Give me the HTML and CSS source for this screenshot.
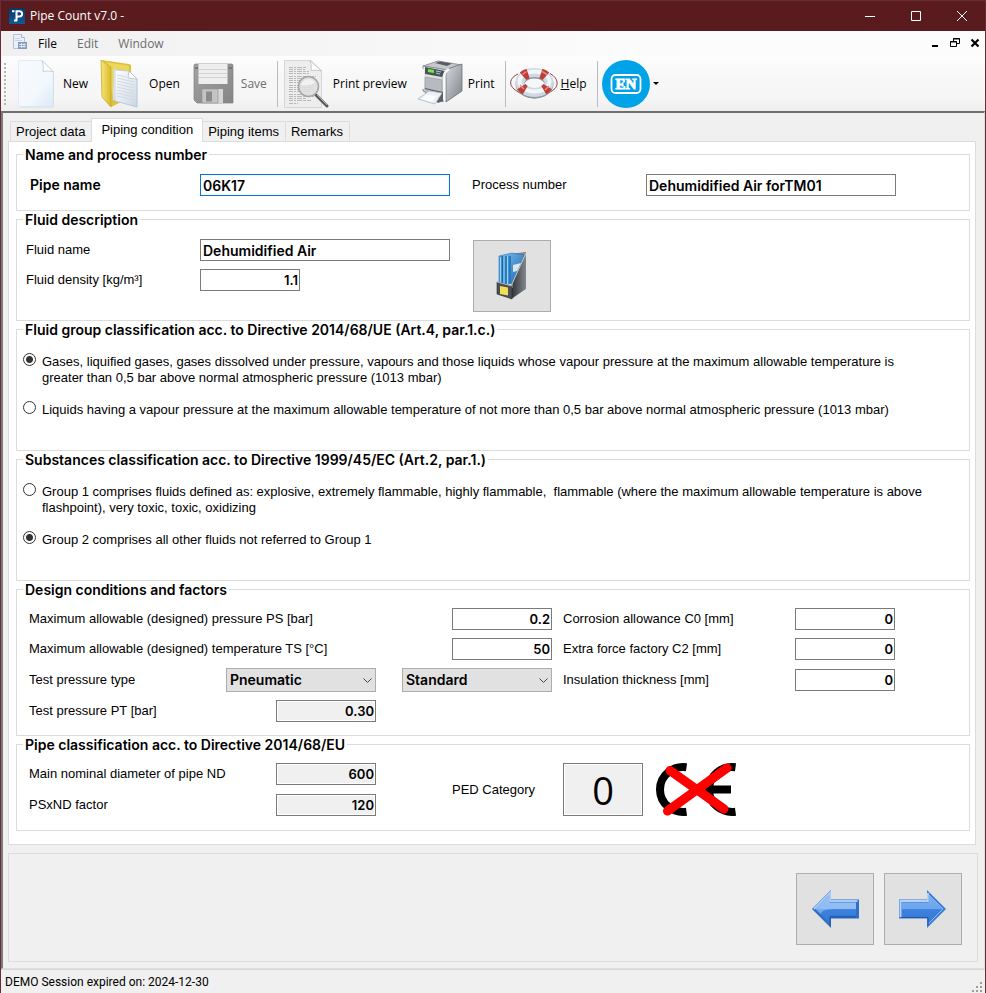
FILE: index.html
```html
<!DOCTYPE html>
<html lang="en">
<head>
<meta charset="utf-8">
<title>Pipe Count v7.0</title>
<link rel="stylesheet" href="styles.css">
</head>
<body>
<div class="window">
  <header class="titlebar">
    <svg class="app-icon" viewBox="0 0 16 16" aria-hidden="true">
      <defs><linearGradient id="appg" x1="0" y1="0" x2="0" y2="1"><stop offset="0" stop-color="#0a3765"/><stop offset="1" stop-color="#0d5a97"/></linearGradient></defs>
      <rect width="16" height="16" fill="url(#appg)"/>
      <path d="M3 3.200h2.500M7.500 2.300v11M7 3.200h3.500a2.600 2.600 0 0 1 0 5.200H8M5 12.500h3" fill="none" stroke="#fff" stroke-width="2"/>
    </svg>
    <h1 class="title">Pipe Count v7.0 -</h1>
    <div class="window-buttons">
      <button type="button" aria-label="Minimize"><svg viewBox="0 0 10 10"><path d="M0 5.500h10"/></svg></button>
      <button type="button" aria-label="Maximize"><svg viewBox="0 0 10 10"><path d="M.5.500h9v9h-9z"/></svg></button>
      <button type="button" aria-label="Close"><svg viewBox="0 0 10 10"><path d="M0 0l10 10M10 0L0 10"/></svg></button>
    </div>
  </header>

  <nav class="menubar">
    <svg class="doc-icon" viewBox="0 0 14 16" aria-hidden="true">
      <path d="M.5.500h8l3 3v11H.5z" fill="#eaf0f9" stroke="#b4c2d8"/>
      <path d="M8.500.500v3h3" fill="#fff" stroke="#9fb2cf"/>
      <path d="M2 4.500h5M2 6.500h7" stroke="#c6d3e6"/>
      <path d="M5 8h9v7H5z" fill="#8299c0"/>
      <path d="M6 10.500h7M6 12.500h7M8.500 9v5M11 9v5" stroke="#e8f0fb" stroke-width=".8"/>
    </svg>
    <button type="button" class="menu">File</button>
    <button type="button" class="menu" disabled>Edit</button>
    <button type="button" class="menu" disabled>Window</button>
    <div class="child-buttons">
      <button type="button" aria-label="Minimize document"><svg viewBox="0 0 10 10"><path d="M2 8h6" stroke-width="2"/></svg></button>
      <button type="button" aria-label="Restore document"><svg viewBox="0 0 10 10"><path d="M3.500 3V.500h6v5H7M3 1h7M.5 3.500h6v5h-6zM0 4h7"/></svg></button>
      <button type="button" aria-label="Close document"><svg viewBox="0 0 10 10"><path d="M1.500 1.500l7 7M8.500 1.500l-7 7" stroke-width="2.200"/></svg></button>
    </div>
  </nav>

  <div class="toolbar" role="toolbar" aria-label="Main">
    <span class="grip"></span>
    <button type="button" class="tool">
      <svg viewBox="0 0 48 48" aria-hidden="true">
        <defs><linearGradient id="pg" x1="0" y1="0" x2="1" y2="1"><stop offset="0" stop-color="#f8fafe"/><stop offset=".6" stop-color="#f3f8fd"/><stop offset="1" stop-color="#dbe8f6"/></linearGradient></defs>
        <path d="M6.500.500H30L41.500 12v35h-35z" fill="url(#pg)" stroke="#e6ebf2"/>
        <path d="M30 .5c1.500 4 1.500 7 1 11 4-.8 7-.6 10.500.500z" fill="#fff" stroke="#b9c6d6" stroke-width=".8"/>
        <path d="M41.500 12v35H8" fill="none" stroke="#d2deeb"/>
      </svg>New</button>
    <button type="button" class="tool">
      <svg viewBox="0 0 48 48" aria-hidden="true">
        <defs>
          <linearGradient id="fg" x1="0" y1="0" x2="1" y2="0"><stop offset="0" stop-color="#f7e67a"/><stop offset="1" stop-color="#d8b92a"/></linearGradient>
          <linearGradient id="sg" x1="0" y1="0" x2="1" y2="1"><stop offset="0" stop-color="#fff"/><stop offset="1" stop-color="#c9d6e5"/></linearGradient>
        </defs>
        <path d="M3 0l28 4 2 1v14l-4 20-16 8-9-10z" fill="#dcc23c"/>
        <path d="M6 2l21 3 4 1v12l-15 22z" fill="#ecd75a"/>
        <path d="M16 9l15 3 8 7v28l-24-7z" fill="url(#sg)" stroke="#c2ccd8" stroke-width=".6"/>
        <path d="M31 11l8 8v28l-22-6V10z" fill="url(#sg)" stroke="#b6c2d0" stroke-width=".7"/>
        <path d="M31 11l-1 7 9 1z" fill="#fff" stroke="#aab6c4" stroke-width=".7"/>
        <path d="M19 15l9 2M19 18l17 4M19 21l17 4M19 24l17 4M19 27l17 4M19 30l17 4M19 33l17 4M19 36l17 4" stroke="#d2d9e2"/>
        <path d="M3 0l10 7v40L4 37z" fill="url(#fg)" stroke="#c6a925" stroke-width=".7"/>
      </svg>Open</button>
    <button type="button" class="tool" disabled>
      <svg viewBox="0 0 48 48" aria-hidden="true">
        <defs><linearGradient id="dg" x1="0" y1="0" x2="1" y2="1"><stop offset="0" stop-color="#a2a2a2"/><stop offset="1" stop-color="#858585"/></linearGradient></defs>
        <path d="M4 5l1-1h37l1 1v38H7l-3-3z" fill="url(#dg)" stroke="#818181" stroke-width=".7"/>
        <path d="M8.500 4h29v20h-29z" fill="#eee"/>
        <path d="M9 9.500h28M9 13.500h28M9 17.500h28" stroke="#d2d2d2"/>
        <path d="M12 29h21v14H12z" fill="#d5d5d5"/>
        <path d="M12 29h16v14H12z" fill="#c4c4c4" stroke="#999" stroke-width=".7"/>
        <path d="M16 31.500h6v10h-6z" fill="#8b8b8b"/>
        <path d="M5 7h3v2H5zM38.500 7H42v2h-3.500z" fill="#777"/>
      </svg>Save</button>
    <span class="separator"></span>
    <button type="button" class="tool">
      <svg viewBox="0 0 48 48" aria-hidden="true">
        <path d="M2.500.500H29L39.500 11v36.500h-37z" fill="#ededed" stroke="#d6d6d6"/>
        <path d="M28 .5c1.500 4 1.500 7 1 10 4-.6 7-.4 10.500.500z" fill="#fff" stroke="#bdbdbd" stroke-width=".8"/>
        <path d="M7 7.500h18M7 9.500h16M7 11.500h20M7 13.500h20M7 16.500h27M7 18.500h26M7 20.500h27M7 22.500h26M7 25.500h27M7 27.500h24M7 29.500h27M7 31.500h25M7 34.500h27M7 36.500h25M7 38.500h18M7 40.500h22M7 43.500h9" stroke="#b9b9b9" stroke-dasharray="4 1 2 1 5 1 3 1"/>
        <path d="M34 35l11 11" stroke="#555" stroke-width="3" stroke-linecap="round"/>
        <path d="M35 35l10 10" stroke="#a9a9a9" stroke-width="1"/>
        <circle cx="26.500" cy="26.500" r="10" fill="#dedede" fill-opacity=".85" stroke="#a5a5a5" stroke-width="1.500"/>
        <path d="M19 25a8 8 0 0 1 14-3c-4 4-9 4-14 3z" fill="#f6f6f6" opacity=".8"/>
      </svg>Print preview</button>
    <button type="button" class="tool">
      <svg viewBox="0 0 48 48" aria-hidden="true">
        <defs>
          <linearGradient id="pr1" x1="0" y1="0" x2="1" y2="1"><stop offset="0" stop-color="#d7d9dc"/><stop offset="1" stop-color="#7d8288"/></linearGradient>
          <linearGradient id="pr2" x1="0" y1="0" x2="0" y2="1"><stop offset="0" stop-color="#f4f5f7"/><stop offset="1" stop-color="#a6abb1"/></linearGradient>
        </defs>
        <path d="M6 6L21 1l24 4-15 5z" fill="#c5c9ce" stroke="#84888e" stroke-width=".8"/>
        <path d="M18 3l5-1.500 12 2L30 6z" fill="#595d62"/>
        <path d="M29 15Q29 9 33 8l12-4v27L29 42z" fill="url(#pr1)" stroke="#6f747a" stroke-width=".8"/>
        <path d="M6 6l24 4-4 6v26L6 31z" fill="url(#pr2)" stroke="#7e8389" stroke-width=".8"/>
        <path d="M8 7l20 4-3 6L8 14z" fill="#46565c"/>
        <path d="M11 9l6 1v3l-6-1z" fill="#74ec38"/>
        <path d="M19 11l5 1M19 13l4 1" stroke="#b8c2c8"/>
        <path d="M8 17l17 3v12L8 29z" fill="#b7bbc0" stroke="#999ea4" stroke-width=".7"/>
        <path d="M6 9v20M27 40V17q0-5 5-8" fill="none" stroke="#f6f7f8" stroke-width="2.500"/>
        <path d="M8 28l18 4v9l-5 2-3-3 2-8L8 29z" fill="#5c6168"/>
        <path d="M12 31l13 2-7 11L1 39z" fill="#edf2f9" stroke="#aab4c2" stroke-width=".8"/>
        <path d="M9 35l10 1-4 6-10-3z" fill="#fff"/>
      </svg>Print</button>
    <span class="separator"></span>
    <button type="button" class="tool">
      <svg viewBox="0 0 48 48" aria-hidden="true">
        <g fill="none">
          <path d="M8 14C-1 18-1 25 4 29s6 4 10 6q10 6 21-.5c4-2 7-3 10-6s4-10-5-15" stroke="#8d4347" stroke-width="1"/>
          <ellipse cx="24.500" cy="24" rx="14.500" ry="10" stroke="#8b98a4" stroke-width="9"/>
          <ellipse cx="24.500" cy="22.500" rx="14.500" ry="10" stroke="#cfd9e1" stroke-width="9"/>
          <ellipse cx="24.500" cy="21.500" rx="15" ry="10" stroke="#f3f6f9" stroke-width="4"/>
          <g stroke="#bd4038" stroke-width="10">
            <path d="M37.700 26.600A14.500 10 0 0 1 33.800 30.200M15.200 30.200A14.500 10 0 0 1 11.300 26.600M13.100 16.300A14.500 10 0 0 1 18.100 13.500M30.900 13.500A14.500 10 0 0 1 35.900 16.300"/>
          </g>
          <path d="M39 26l-4 4M14 29l-4-4M12.500 14.500l4-3M32 11.500l5 3" stroke="#e88b82" stroke-width="1.500"/>
        </g>
      </svg><span><u>H</u>elp</span></button>
    <span class="separator"></span>
    <button type="button" class="tool language" aria-label="Language: EN">
      <svg viewBox="0 0 48 48" aria-hidden="true">
        <circle cx="24" cy="24" r="24" fill="#00a2e8"/>
        <rect x="9.500" y="15" width="29" height="18" rx="4" fill="none" stroke="#fff" stroke-width="1.800"/>
        <text x="24" y="29" text-anchor="middle" class="lang-text">EN</text>
      </svg><i class="drop"></i></button>
  </div>

  <main class="client">
    <div class="tabs" role="tablist">
      <button type="button" role="tab" class="tab">Project data</button>
      <button type="button" role="tab" class="tab active" aria-selected="true">Piping condition</button>
      <button type="button" role="tab" class="tab">Piping items</button>
      <button type="button" role="tab" class="tab">Remarks</button>
    </div>

    <form class="page">
      <fieldset class="short">
        <legend>Name and process number</legend>
        <div class="pairs">
          <label for="pipe" class="strong">Pipe name</label>
          <input id="pipe" class="focused" value="06K17">
          <label for="process" class="second">Process number</label>
          <input id="process" value="Dehumidified Air forTM01">
        </div>
      </fieldset>

      <fieldset class="fluid">
        <legend>Fluid description</legend>
        <div class="pairs">
          <label for="fluid">Fluid name</label>
          <input id="fluid" value="Dehumidified Air">
          <button type="button" class="big-button library" aria-label="Fluid library">
            <svg viewBox="0 0 48 48" aria-hidden="true">
              <defs>
                <linearGradient id="bl" x1="0" y1="0" x2="1" y2="1"><stop offset="0" stop-color="#79bdf0"/><stop offset="1" stop-color="#1b68ae"/></linearGradient>
                <linearGradient id="bx" x1="0" y1="0" x2="1" y2="0"><stop offset="0" stop-color="#33363a"/><stop offset="1" stop-color="#84888d"/></linearGradient>
              </defs>
              <path d="M22 2l16-2v36L24 47z" fill="#7b8287"/>
              <path d="M11 4L24 1l12 2-10 28-15 1z" fill="url(#bl)" stroke="#2c76b8" stroke-width=".6"/>
              <path d="M11 4h12v28H11z" fill="#3c91d4"/>
              <path d="M12.500 5v26M16 4v28M19.500 4v28" stroke="#9ed2f7"/>
              <path d="M14.500 4v28M18 4v28M22 4v28" stroke="#1b64a6"/>
              <path d="M25 13l8-2-4 8-4 1z" fill="#dce6ee"/>
              <path d="M38 1v36L24 46V32z" fill="url(#bx)"/>
              <path d="M38 1L24 32v4" fill="none" stroke="#c8cccf"/>
              <path d="M9 30l15 4v13L9 42z" fill="#4b4e52" stroke="#25282b" stroke-width=".6"/>
              <path d="M9 30l15 4" stroke="#b6babd"/>
              <path d="M12 34l8 1.500v8L12 42z" fill="#f2df58"/>
            </svg></button>
          <label for="density" class="first">Fluid density [kg/m³]</label>
          <input id="density" class="number" value="1.1">
        </div>
      </fieldset>

      <fieldset class="choices">
        <legend>Fluid group classification acc. to Directive 2014/68/UE (Art.4, par.1.c.)</legend>
        <label class="choice"><input type="radio" name="group" checked><span>Gases, liquified gases, gases dissolved under pressure, vapours and those liquids whose vapour pressure at the maximum allowable temperature is greater than 0,5 bar above normal atmospheric pressure (1013 mbar)</span></label>
        <label class="choice"><input type="radio" name="group"><span>Liquids having a vapour pressure at the maximum allowable temperature of not more than 0,5 bar above normal atmospheric pressure (1013 mbar)</span></label>
      </fieldset>

      <fieldset class="choices">
        <legend>Substances classification acc. to Directive 1999/45/EC (Art.2, par.1.)</legend>
        <label class="choice"><input type="radio" name="substance"><span>Group 1 comprises fluids defined as: explosive, extremely flammable, highly flammable,&nbsp; flammable (where the maximum allowable temperature is above flashpoint), very toxic, toxic, oxidizing</span></label>
        <label class="choice"><input type="radio" name="substance" checked><span>Group 2 comprises all other fluids not referred to Group 1</span></label>
      </fieldset>

      <fieldset class="design">
        <legend>Design conditions and factors</legend>
        <div class="factors">
          <label for="ps" class="wide">Maximum allowable (designed) pressure PS [bar]</label>
          <input id="ps" class="number" value="0.2">
          <label for="c0" class="third">Corrosion allowance C0 [mm]</label>
          <input id="c0" class="number" value="0">

          <label for="ts" class="wide">Maximum allowable (designed) temperature TS [°C]</label>
          <input id="ts" class="number" value="50">
          <label for="c2" class="third">Extra force factory C2 [mm]</label>
          <input id="c2" class="number" value="0">

          <label for="testtype">Test pressure type</label>
          <span class="combo"><select id="testtype"><option>Pneumatic</option></select><svg viewBox="0 0 9 5"><path d="M.5.500l4 4 4-4"/></svg></span>
          <span class="combo"><select aria-label="Test standard"><option>Standard</option></select><svg viewBox="0 0 9 5"><path d="M.5.500l4 4 4-4"/></svg></span>
          <label for="ins" class="third">Insulation thickness [mm]</label>
          <input id="ins" class="number" value="0">

          <label for="pt" class="first">Test pressure PT [bar]</label>
          <input id="pt" class="number" value="0.30" readonly>
        </div>
      </fieldset>

      <fieldset class="pipe-class">
        <legend>Pipe classification acc. to Directive 2014/68/EU</legend>
        <div class="factors">
          <label for="nd">Main nominal diameter of pipe ND</label>
          <input id="nd" class="number" value="600" readonly>
          <label for="psnd" class="first">PSxND factor</label>
          <input id="psnd" class="number" value="120" readonly>
          <label for="ped" class="ped-label">PED Category</label>
          <div class="ped">
            <input id="ped" class="category" value="0" readonly>
            <svg class="ce" viewBox="0 0 81 53" role="img" aria-label="CE mark not applicable">
              <g fill="none" stroke="#000" stroke-width="8">
                <path d="M30.500 4.300C17 2.500 4 12 4 26.500S17 50.500 30.500 48.700"/>
                <path d="M79.500 4.300C66 2.500 53 12 53 26.500s13 24 26.500 22.200M53 26.500h22"/>
              </g>
              <path d="M14 7.500L68 46M71 5L11.500 48" stroke="#f00" stroke-width="9" stroke-linecap="round"/>
            </svg>
          </div>
        </div>
      </fieldset>
    </form>

    <div class="pager">
      <button type="button" class="big-button" aria-label="Previous">
        <svg viewBox="0 0 48 48" aria-hidden="true">
          <defs><linearGradient id="ar" x1="0" y1="0" x2="0" y2="1"><stop offset="0" stop-color="#7cb0f3"/><stop offset=".5" stop-color="#6ea4ec"/><stop offset=".52" stop-color="#3b82e0"/><stop offset="1" stop-color="#3a78d2"/></linearGradient></defs>
          <path d="M1 24L20 5v9.500h28v19H20V43z" fill="#2f6fc6"/>
          <path d="M3 24L19 8v8h27.500" fill="none" stroke="#a9cbf8" stroke-width="2"/>
          <path d="M4.500 24L18.500 10v7.500H45v13H18.500V38z" fill="url(#ar)"/>
          <path d="M4.500 24l5 5c2-4 6-4.500 13-5H45v-6.500H18.500V10z" fill="#b9d6fb" opacity=".45"/>
          <path d="M19 41v-9h26" fill="none" stroke="#1d58ac" stroke-width="1"/>
        </svg></button>
      <button type="button" class="big-button" aria-label="Next">
        <svg viewBox="0 0 48 48" aria-hidden="true">
          <path d="M47 24L28 5v9.500H0v19h28V43z" fill="#3a7cd6"/>
          <path d="M1.500 32V16H29V8" fill="none" stroke="#b5d3fa" stroke-width="2"/>
          <path d="M43.500 24L29.500 10v7.500H3v13h26.500V38z" fill="url(#ar)"/>
          <path d="M29.500 9.500L44 24 29.500 38.500" fill="none" stroke="#8ebaf5" stroke-width="1"/>
          <path d="M2 32.500h27v8" fill="none" stroke="#1d58ac" stroke-width="1"/>
        </svg></button>
    </div>
  </main>

  <footer class="statusbar">
    <span>DEMO Session expired on: 2024-12-30</span>
    <svg class="sizer" viewBox="0 0 12 12" aria-hidden="true"><path d="M9 1h2v2H9zM5 5h2v2H5zM9 5h2v2H9zM1 9h2v2H1zM5 9h2v2H5zM9 9h2v2H9z" fill="#9d9d9d"/></svg>
  </footer>
</div>
</body>
</html>
```
FILE: styles.css
```css
* { box-sizing: border-box; }

:root {
  --ui: "Open Sans", "Noto Sans", sans-serif;
  --form: "Liberation Sans", Arial, sans-serif;
  --bold: Inter, "Liberation Sans", sans-serif;
}

body {
  margin: 0;
  font: 12px/16px var(--ui);
  color: #000;
  background: #f0f0f0;
}

button, input, select { font: inherit; color: inherit; margin: 0; padding: 0; }
button { background: none; border: 0; }
svg { display: block; }

.window {
  min-height: 100vh;
  display: flex;
  flex-direction: column;
  border: 1px solid #672c35;
}

/* Title bar */
.titlebar {
  display: flex;
  align-items: center;
  height: 30px;
  padding-left: 8px;
  background: #5a1b1f;
  color: #fff;
}
.app-icon { width: 16px; height: 16px; }
.title { flex: 1; margin: 0 0 0 5px; font-size: 12px; font-weight: 400; }
.window-buttons { display: flex; height: 100%; }
.window-buttons button { width: 46px; display: grid; place-items: center; }
.window-buttons svg { width: 10px; height: 10px; fill: none; stroke: #fff; overflow: visible; }

/* Menu bar */
.menubar {
  display: flex;
  align-items: center;
  height: 25px;
  padding: 1px 5px 0 12px;
  background: linear-gradient(90deg, #f0f0f0, #fcfcfc 70%);
}
.doc-icon { width: 14px; height: 16px; margin: 0 4px 4px 0; }
.menu { padding: 0 7px; margin-right: 6px; }
.menu:disabled { color: #6d6d6d; }
.child-buttons { display: flex; gap: 10px; margin-left: auto; padding-bottom: 2px; }
.child-buttons svg { width: 10px; height: 10px; fill: none; stroke: #000; }

/* Toolbar */
.toolbar {
  display: flex;
  align-items: center;
  height: 55px;
  padding-left: 3px;
  background: linear-gradient(#fdfdfd, #f7f7f7 40%, #f6f6f6 75%, #eee);
}
.grip { width: 2px; height: 42px; margin-right: 6px; background: repeating-linear-gradient(#b5b5b5 0 2px, transparent 2px 4px); }
.tool { display: flex; align-items: center; gap: 3px; margin-right: 10px; }
.tool:disabled { color: #6d6d6d; }
.tool svg { width: 48px; height: 48px; flex: none; }
.separator { width: 1px; height: 46px; margin-right: 4px; background: #b9bcbf; }
.lang-text { font: 700 15px "Liberation Serif", serif; fill: #fff; stroke: #fff; }
.drop { border: 3px solid transparent; border-top-color: #000; border-bottom: 0; }

/* Document area */
.client {
  flex: 1;
  padding: 5px 6px 6px 5px;
  border: solid;
  border-width: 2px 1px 1px 2px;
  border-color: #6f6f6f #dfdfdf #dfdfdf #7c7c7c;
  background: #f0f0f0;
  font-family: var(--form);
  font-size: 13px;
}
.tabs { display: flex; align-items: flex-end; padding-left: 2px; }
.tab {
  height: 20px;
  padding: 0 6px 0 5px;
  border: 1px solid #dcdcdc;
  border-bottom: 0;
  margin-left: -1px;
}
.tab.active {
  z-index: 1;
  height: 24px;
  padding: 0 9px 2px;
  margin-bottom: -1px;
  background: #fff;
}
.tab:first-child { margin-left: 0; }

.page {
  margin-right: 2px;
  padding: 4px 5px 13px 7px;
  border: 1px solid #dcdcdc;
  background: #fff;
}

fieldset {
  min-width: 0;
  margin: 0;
  padding: 0 8px 0 6px;
  border: 1px solid #dcdcdc;
}
legend {
  height: 17px;
  padding: 0 2px;
  font: 600 14px/18px var(--bold);
}
.short { height: 65px; }
.fluid { height: 110px; }
.choices { height: 130px; }
.design { height: 155px; }
.pipe-class { height: 95px; }

input, select {
  height: 22px;
  width: 100%;
  border: 1px solid #7a7a7a;
  border-radius: 0;
  padding: 0 2px;
  background: #fff;
  font: 600 14px/20px var(--bold);
}
.number { width: 100px; text-align: right; justify-self: end; padding: 0 1px; font-size: 13px; }
input[readonly] { background: #f0f0f0; box-shadow: inset 0 0 0 1px #fff; }
.focused { border-color: #0078d7; outline: none; }
.strong { padding-left: 4px; font: 600 14px/16px var(--bold); }
.first { grid-column: 1; }

.pairs {
  display: grid;
  grid-template-columns: 174px 250px 196px 250px;
  row-gap: 8px;
  align-items: center;
  padding: 11px 0 0 3px;
}
.second { padding-left: 22px; }
.pairs .number { justify-self: start; }

.big-button {
  display: grid;
  place-items: center;
  width: 78px;
  height: 72px;
  border: 1px solid #adadad;
  background: #e1e1e1;
}
.big-button svg { width: 48px; height: 48px; }
.library { grid-area: 1 / 3 / 4 / 4; align-self: start; margin: 1px 0 0 23px; }

.choices { padding: 15px 40px 0 6px; }
.choice { display: grid; grid-template-columns: 19px 1fr; margin-bottom: 15px; line-height: 16px; }
.choice span { padding-top: 1px; }
.choice input {
  appearance: none;
  width: 13px;
  height: 13px;
  padding: 0;
  border: 1px solid #333;
  border-radius: 50%;
}
.choice input:checked { background: radial-gradient(circle, #333 0 3px, #fff 4px); }

.factors {
  display: grid;
  grid-template-columns: 197px 150px 26px 150px 11px 232px 100px;
  row-gap: 8px;
  align-items: center;
  padding: 10px 0 0 6px;
}
.factors .wide { grid-column: 1 / 4; }
.factors .third { grid-column: 6; }
.factors .combo:nth-of-type(2) { grid-column: 4; }

.combo { display: grid; align-items: center; }
.combo > * { grid-area: 1 / 1; }
.combo select { appearance: none; height: 24px; padding: 0 3px; border-color: #adadad; background: #e1e1e1; }
.combo svg { width: 9px; height: 5px; margin-right: 4px; justify-self: end; fill: none; stroke: #444; pointer-events: none; overflow: visible; }

.pipe-class .factors { row-gap: 9px; }
.pipe-class .number { grid-column: 2; }
.ped-label { grid-area: 1 / 4 / 3 / 5; padding-left: 50px; }
.ped { grid-area: 1 / 6 / 3 / 8; display: flex; gap: 13px; }
.category { width: 80px; height: 53px; text-align: center; font: 38px/50px var(--ui); }
.ce { width: 81px; height: 53px; }

.pager {
  display: flex;
  justify-content: flex-end;
  gap: 10px;
  margin-top: 8px;
  padding: 19px 15px 16px;
  border: 1px solid #dcdcdc;
}

.statusbar {
  display: flex;
  justify-content: space-between;
  align-items: center;
  height: 24px;
  padding: 0 2px 0 4px;
  border-top: 1px solid #d7d7d7;
  font-family: Roboto, sans-serif;
}
.sizer { width: 12px; height: 12px; align-self: flex-end; }
```
